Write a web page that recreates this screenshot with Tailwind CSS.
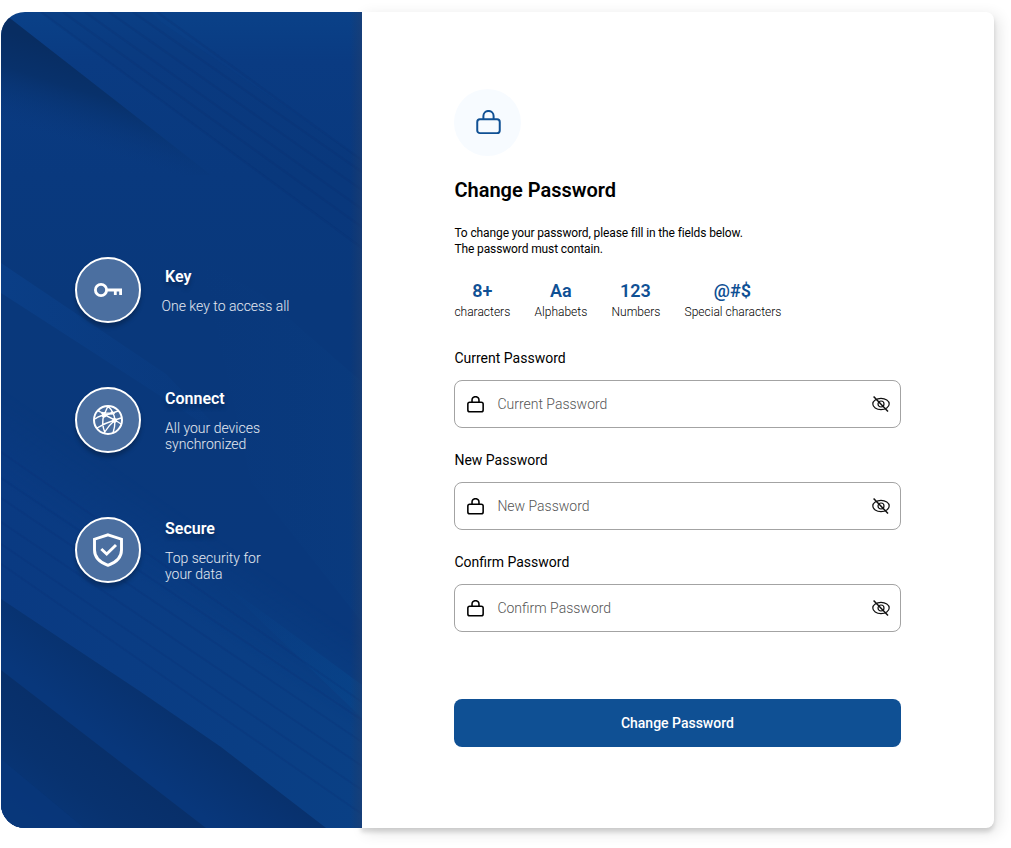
<!DOCTYPE html>
<html lang="en">
<head>
<meta charset="utf-8">
<title>Change Password</title>
<script src="https://cdn.jsdelivr.net/npm/@tailwindcss/browser@4"></script>
</head>
<body class="w-[1011px] h-[848px] overflow-hidden bg-white font-[Roboto,sans-serif] text-black">
<svg class="hidden">
  <symbol id="lock" viewBox="0 0 24 24"><path d="M7.1 8.8V5.8a4.9 4.9 0 0 1 9.8 0v3" /><rect x="1.2" y="8.8" width="21.6" height="13.4" rx="2.6"/></symbol>
  <symbol id="eye" viewBox="0 0 18 16"><ellipse cx="9" cy="8" rx="8.2" ry="5.6"/><circle cx="9" cy="8" r="3"/><path d="M1.6 .6 16 15.4" stroke-width="1.5"/></symbol>
</svg>
<main class="flex pt-3 pl-[0.5px]">
  <aside class="relative w-[361px] h-[816px] shrink-0 overflow-hidden rounded-l-[24px] text-white">
    <svg class="absolute inset-0 size-full" viewBox="0 0 361 816" preserveAspectRatio="none">
      <defs>
        <linearGradient id="base" x1="0" y1="0" x2="0" y2="1"><stop offset="0" stop-color="#0a4188"/><stop offset=".06" stop-color="#0a3b82"/><stop offset=".2" stop-color="#09397e"/><stop offset=".35" stop-color="#09387b"/><stop offset="1" stop-color="#09387d"/></linearGradient>
        <linearGradient id="d1" gradientUnits="userSpaceOnUse" x1="66" y1="38" x2="40" y2="120"><stop offset="0" stop-color="#082d62"/><stop offset=".4" stop-color="#08316b"/><stop offset="1" stop-color="#09377a" stop-opacity="0"/></linearGradient>
        <linearGradient id="d2" gradientUnits="userSpaceOnUse" x1="200" y1="716" x2="158" y2="770"><stop offset="0" stop-color="#08316d"/><stop offset="1" stop-color="#08377b"/></linearGradient>
        <linearGradient id="d3" gradientUnits="userSpaceOnUse" x1="110" y1="735" x2="44" y2="820"><stop offset="0" stop-color="#082f69"/><stop offset=".5" stop-color="#08326f"/><stop offset="1" stop-color="#08377a"/></linearGradient>
        <linearGradient id="l1" x1="0" y1="0" x2="1" y2="0"><stop offset="0" stop-color="#0a3e86"/><stop offset="1" stop-color="#0a3e86" stop-opacity=".1"/></linearGradient>
        <linearGradient id="l2" x1="0" y1="0" x2="1" y2="0"><stop offset="0" stop-color="#0a3a82"/><stop offset="1" stop-color="#0a4085"/></linearGradient>
        <linearGradient id="l2fade" gradientUnits="userSpaceOnUse" x1="150" y1="480" x2="105" y2="545"><stop offset="0" stop-color="#000"/><stop offset="1" stop-color="#fff"/></linearGradient>
        <mask id="m2"><rect width="361" height="816" fill="url(#l2fade)"/></mask>
        <linearGradient id="l3" x1="0" y1="0" x2="1" y2="0"><stop offset="0" stop-color="#08438a" stop-opacity="0"/><stop offset="1" stop-color="#08458b"/></linearGradient>
        <linearGradient id="l4" x1="0" y1="0" x2="1" y2="0"><stop offset="0" stop-color="#0a3c82" stop-opacity="0"/><stop offset="1" stop-color="#0a3f82"/></linearGradient>
        <linearGradient id="edge" x1="0" y1="0" x2="1" y2="0"><stop offset="0" stop-color="#203a64" stop-opacity="0"/><stop offset="1" stop-color="#213f70" stop-opacity=".55"/></linearGradient>
      </defs>
      <rect width="361" height="816" fill="url(#base)"/>
      <path d="M0 0 10 7 210 163 0 170Z" fill="url(#d1)"/>
      <path d="M160 10 361 148V235L40 0H150Z" fill="#08367a" opacity=".2"/>
      <g stroke="#082f70" stroke-opacity=".2" stroke-width="2.2" fill="none">
        <path d="M40 0 361 236M62 0 361 215M84 0 361 197M108 0 361 178M132 0 361 160M156 0 361 148"/>
      </g>
      <path d="M0 251 165 362 230 430 90 339 0 281Z" fill="url(#l1)"/>
      <path d="M200 248 260 282 361 370V610L250 470Z" fill="url(#l4)" opacity=".35"/>
      <g mask="url(#m2)"><path d="M0 360 361 610V816H325L220 738 0 587Z" fill="url(#l2)"/></g>
      <path d="M215 566 361 673V706Z" fill="url(#l3)" opacity=".7"/>
      <g stroke="#082f72" stroke-opacity=".2" stroke-width="1.8" fill="none">
        <path d="M0 440 361 690M0 466 361 708M0 486 361 730M0 510 361 754M0 532 361 778M0 552 361 802"/>
      </g>
      <path d="M0 587 140 680 220 735 325 816H0Z" fill="url(#d2)"/>
      <path d="M0 658 205 816H0Z" fill="url(#d3)"/>
      <path d="M0 747 83 816H0Z" fill="#09377b" opacity=".8"/>
      <rect x="349" width="12" height="816" fill="url(#edge)"/>
    </svg>
    <ul class="relative flex flex-col gap-16 pt-[245px] pl-[74.5px]">
      <li class="flex h-[66px] gap-[24px]">
        <div class="flex size-[66px] shrink-0 items-center justify-center rounded-full border-2 border-white bg-[#4b6fa0] shadow-[0_4px_4px_rgba(0,0,0,0.25)]">
          <svg class="w-7 h-[14px]" viewBox="0 0 28 14" fill="none" stroke="#fff"><circle cx="7" cy="7" r="5.6" stroke-width="2.8"/><path d="M13 7H28M21.3 7V12M26.6 7V12" stroke-width="2.8"/></svg>
        </div>
        <div class="pt-[10px]"><h2 class="text-base/[19px] font-semibold text-shadow-[0_4px_4px_rgba(0,0,0,0.25)]">Key</h2><p class="-ml-[3.5px] mt-3 text-sm/4 font-light text-white/90">One key to access all</p></div>
      </li>
      <li class="flex h-[66px] gap-[24px]">
        <div class="flex size-[66px] shrink-0 items-center justify-center rounded-full border-2 border-white bg-[#4b6fa0] shadow-[0_4px_4px_rgba(0,0,0,0.25)]">
          <svg class="size-[30px]" viewBox="0 0 30 30" fill="none" stroke="#fff" stroke-width="1.4"><circle cx="15" cy="15" r="14" stroke-width="2"/><path d="M5 6Q10 9 22 8M2 14Q7 10 17 9L25 6M15 1 11 10Q8 18 12 28M15 1Q21 7 22 15Q22 22 20 28M12 10Q16 12 22 15L28 19M4 23Q12 18 22 15L28 13M22 15Q16 20 11 28M11 10 5 5"/><circle cx="11" cy="10.3" r="1.7" fill="#fff"/><circle cx="21.5" cy="15.5" r="1.7" fill="#fff"/><circle cx="19" cy="8" r="1" fill="#fff"/></svg>
        </div>
        <div class="pt-[2px]"><h2 class="text-base/[19px] font-semibold text-shadow-[0_4px_4px_rgba(0,0,0,0.25)]">Connect</h2><p class="mt-3 text-sm/4 font-light text-white/90">All your devices<br>synchronized</p></div>
      </li>
      <li class="flex h-[66px] gap-[24px]">
        <div class="flex size-[66px] shrink-0 items-center justify-center rounded-full border-2 border-white bg-[#4b6fa0] shadow-[0_4px_4px_rgba(0,0,0,0.25)]">
          <svg class="w-[30px] h-[34px]" viewBox="0 0 30 34" fill="none" stroke="#fff" stroke-width="2.9"><path d="M15 1.8 28.5 6.2V17Q28.5 27.5 15 32.3Q1.5 27.5 1.5 17V6.2Z"/><path d="M8.3 16 13.7 21 23 12"/></svg>
        </div>
        <div class="pt-[2px]"><h2 class="text-base/[19px] font-semibold text-shadow-[0_4px_4px_rgba(0,0,0,0.25)]">Secure</h2><p class="mt-3 text-sm/4 font-light text-white/90">Top security for<br>your data</p></div>
      </li>
    </ul>
  </aside>
  <section class="-ml-[0.1px] w-[633px] h-[816px] rounded-r-[8px] bg-white pl-[93px] pt-[77px] shadow-[0_4px_4px_rgba(0,0,0,0.13),4px_4px_15px_rgba(0,0,0,0.12)]">
    <form class="flex w-[447px] flex-col">
      <div class="flex size-[67px] items-center justify-center rounded-full bg-[#f7fbff] pl-px"><svg class="size-[25px]" fill="none" stroke="#0f5094" stroke-width="1.9"><use href="#lock"/></svg></div>
      <h1 class="mt-[22px] text-xl/6 font-semibold">Change Password</h1>
      <p class="mt-[23px] text-xs/4 tracking-[-0.12px]">To change your password, please fill in the fields below.<br>The password must contain.</p>
      <dl class="mt-[23px] flex gap-[24.3px] text-center">
        <div><dt class="text-lg/[21px] font-semibold text-[#0f5094]">8+</dt><dd class="mt-1 text-xs/[14px] font-light">characters</dd></div>
        <div><dt class="text-lg/[21px] font-semibold text-[#0f5094]">Aa</dt><dd class="mt-1 text-xs/[14px] font-light">Alphabets</dd></div>
        <div><dt class="pr-px text-lg/[21px] font-semibold text-[#0f5094]">123</dt><dd class="mt-1 text-xs/[14px] font-light">Numbers</dd></div>
        <div><dt class="pr-px text-lg/[21px] font-semibold text-[#0f5094]">@#$</dt><dd class="mt-1 text-xs/[14px] font-light">Special characters</dd></div>
      </dl>
      <div class="mt-[31px] flex flex-col gap-6">
        <label class="flex flex-col gap-[14px] text-sm/4"><span>Current Password</span>
          <span class="flex h-12 items-center rounded-lg border border-[#a3a3a3] px-3"><svg class="size-[17px]" fill="none" stroke="#000" stroke-width="2.2"><use href="#lock"/></svg><span class="ml-[13px] grow font-light text-[#555]">Current Password</span><svg class="w-[18px] h-4 -mr-[2px]" fill="none" stroke="#111" stroke-width="1.2"><use href="#eye"/></svg></span></label>
        <label class="flex flex-col gap-[14px] text-sm/4"><span>New Password</span>
          <span class="flex h-12 items-center rounded-lg border border-[#a3a3a3] px-3"><svg class="size-[17px]" fill="none" stroke="#000" stroke-width="2.2"><use href="#lock"/></svg><span class="ml-[13px] grow font-light text-[#555]">New Password</span><svg class="w-[18px] h-4 -mr-[2px]" fill="none" stroke="#111" stroke-width="1.2"><use href="#eye"/></svg></span></label>
        <label class="flex flex-col gap-[14px] text-sm/4"><span>Confirm Password</span>
          <span class="flex h-12 items-center rounded-lg border border-[#a3a3a3] px-3"><svg class="size-[17px]" fill="none" stroke="#000" stroke-width="2.2"><use href="#lock"/></svg><span class="ml-[13px] grow font-light text-[#555]">Confirm Password</span><svg class="w-[18px] h-4 -mr-[2px]" fill="none" stroke="#111" stroke-width="1.2"><use href="#eye"/></svg></span></label>
      </div>
      <button type="button" class="mt-[67px] h-12 rounded-lg bg-[#0f5094] pr-px text-sm font-medium text-white">Change Password</button>
    </form>
  </section>
</main>
</body>
</html>
